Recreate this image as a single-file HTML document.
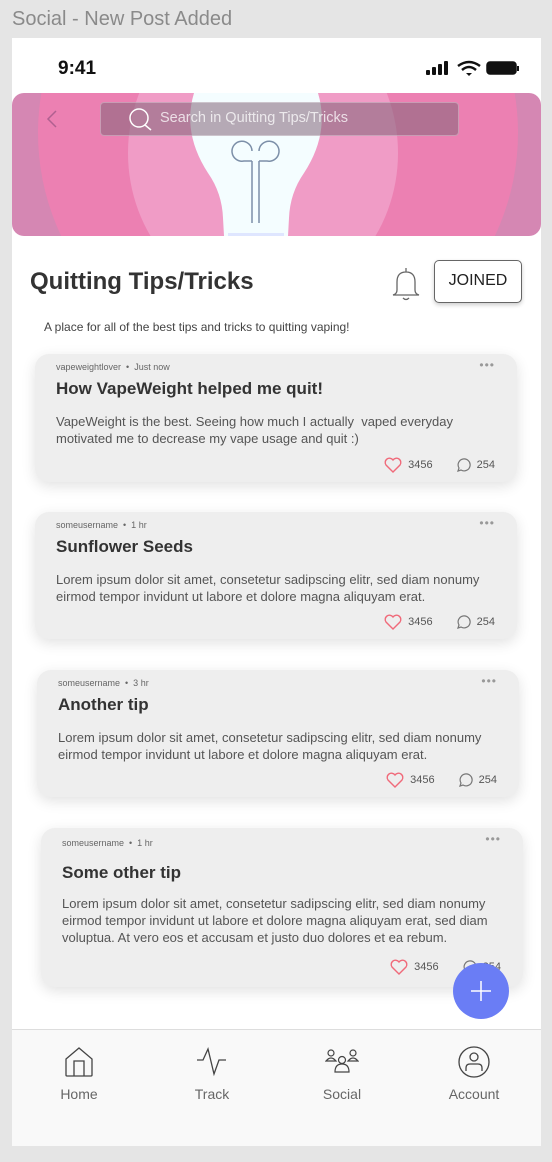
<!DOCTYPE html>
<html><head><meta charset="utf-8"><style>
*{margin:0;padding:0;box-sizing:border-box}
body{width:552px;height:1162px;background:#e5e5e5;font-family:"Liberation Sans",sans-serif;position:relative;overflow:hidden;color:#333}
.abs{position:absolute}
.frame{left:12px;top:38px;width:529px;height:1108px;background:#fff;overflow:hidden}
.card{position:absolute;width:482px;background:#eeeeee;border-radius:14px;box-shadow:0 4px 14px rgba(0,0,0,.12)}
.meta{position:absolute;left:21px;top:8px;font-size:9px;color:#666}
.dots{position:absolute;right:22px;top:4px;font-size:12px;color:#999;letter-spacing:1px}
.ct{position:absolute;left:21px;top:25px;font-size:17px;font-weight:bold;color:#333}
.cb{position:absolute;left:21px;top:59px;font-size:13px;line-height:17px;color:#555;width:440px}
.stats{position:absolute;right:22px;bottom:9px;font-size:11px;color:#555;display:flex;align-items:center}
.stats svg{margin-right:6px}
.nav{left:0;top:991px;width:529px;height:117px;background:#f9f9f9;border-top:1px solid #ddd}
.ni{position:absolute;top:16px;width:90px;text-align:center;font-size:14px;color:#666}
.ni svg{display:block;margin:0 auto 8px}
</style></head><body>
<div class="abs" style="left:12px;top:8px;font-size:20px;color:#8a8a8a">Social - New Post Added</div>
<div class="abs frame">
  <div class="abs" style="left:46px;top:20px;font-size:19px;font-weight:bold;color:#111">9:41</div>
  <svg class="abs" style="left:414px;top:22px" width="112" height="18" viewBox="0 0 112 18">
    <rect x="0" y="10" width="4" height="5" rx="1" fill="#111"/><rect x="6" y="7" width="4" height="8" rx="1" fill="#111"/><rect x="12" y="4" width="4" height="11" rx="1" fill="#111"/><rect x="18" y="1" width="4" height="14" rx="1" fill="#111"/>
    <path d="M32 6 Q43 -2 54 6" stroke="#111" stroke-width="2.5" fill="none"/><path d="M36 10 Q43 4 50 10" stroke="#111" stroke-width="2.5" fill="none"/><path d="M40 13 L43 16 L46 13 Z" fill="#111"/>
    <rect x="61" y="2" width="29" height="12" rx="3" fill="#111" stroke="#111" stroke-width="1.5"/><rect x="91" y="6" width="2" height="5" fill="#111"/>
  </svg>
  <div class="abs" style="left:0;top:55px;width:529px;height:143px;border-radius:12px;overflow:hidden;background:#d587b3">
    <div class="abs" style="left:26px;top:-200px;width:480px;height:480px;border-radius:50%;background:#ec80b2"></div>
    <div class="abs" style="left:116px;top:-90px;width:270px;height:300px;border-radius:50%;background:#f09cc6"></div>
    <svg class="abs" style="left:170px;top:0" width="160" height="143" viewBox="0 0 160 143">
      <path d="M12 0 L136 0 Q148 40 122 80 Q108 100 107 125 L106 143 L42 143 L41 125 Q40 100 26 80 Q0 40 12 0 Z" fill="#f4fdff"/>
      <rect x="46" y="140" width="56" height="3" fill="#dfe6ff"/>
      <path d="M70 130 L70 68 M77 130 L77 68 M70 68 L62 68 A10 10 0 1 1 70 58 M77 68 L85 68 A10 10 0 1 0 77 58" stroke="#7c8fa8" stroke-width="1.5" fill="none"/>
    </svg>
    <div class="abs" style="left:88px;top:9px;width:359px;height:34px;border-radius:4px;background:rgba(130,100,120,.55);border:1px solid rgba(255,255,255,.3)"></div>
    <svg class="abs" style="left:116px;top:14px" width="26" height="26" viewBox="0 0 26 26"><circle cx="11" cy="11" r="9" stroke="#fff" stroke-width="1.5" fill="none"/><path d="M17 18 L23 23" stroke="#fff" stroke-width="1.5"/></svg>
    <div class="abs" style="left:148px;top:17px;font-size:14.5px;color:rgba(255,255,255,.75)">Search in Quitting Tips/Tricks</div>
    <svg class="abs" style="left:33px;top:16px" width="14" height="20" viewBox="0 0 14 20"><path d="M11 2 L3 10 L11 18" stroke="#b06090" stroke-width="1.5" fill="none"/></svg>
  </div>
  <div class="abs" style="left:18px;top:230px;font-size:24px;font-weight:bold;color:#333">Quitting Tips/Tricks</div>
  <svg class="abs" style="left:378px;top:226px" width="34" height="40" viewBox="0 0 34 40"><path d="M16 4 V8 M16 8 Q7 8 7 18 V26 Q7 30 3 31 H29 Q25 30 25 26 V18 Q25 8 16 8 M13 34 Q16 37 19 34" stroke="#666" stroke-width="1.3" fill="none"/></svg>
  <div class="abs" style="left:422px;top:222px;width:88px;height:43px;border:1.5px solid #666;border-radius:5px;font-size:16px;text-align:center;line-height:40px;color:#222;box-shadow:0 2px 4px rgba(0,0,0,.2);background:#fff">JOINED</div>
  <div class="abs" style="left:32px;top:282px;font-size:12px;color:#444">A place for all of the best tips and tricks to quitting vaping!</div>
</div>

<div class="card" style="left:35px;top:354px;height:128px">
  <div class="meta">vapeweightlover &nbsp;•&nbsp; Just now</div><div class="dots">•••</div>
  <div class="ct">How VapeWeight helped me quit!</div>
  <div class="cb" style="width:405px">VapeWeight is the best. Seeing how much I actually &nbsp;vaped everyday motivated me to decrease my vape usage and quit :)</div>
  <div class="stats"><svg width="18" height="16" viewBox="0 0 18 16"><path d="M9 15 L2 8 A4 4 0 0 1 9 3 A4 4 0 0 1 16 8 Z" stroke="#f06a7a" stroke-width="1.4" fill="none"/></svg>3456<span style="width:22px"></span><svg width="16" height="16" viewBox="0 0 16 16"><path d="M3 14 L4 11 A6 6 0 1 1 6 13 Z" stroke="#777" stroke-width="1.2" fill="none"/></svg>254</div>
</div>
<div class="card" style="left:35px;top:512px;height:127px">
  <div class="meta">someusername &nbsp;•&nbsp; 1 hr</div><div class="dots">•••</div>
  <div class="ct">Sunflower Seeds</div>
  <div class="cb">Lorem ipsum dolor sit amet, consetetur sadipscing elitr, sed diam nonumy eirmod tempor invidunt ut labore et dolore magna aliquyam erat.</div>
  <div class="stats"><svg width="18" height="16" viewBox="0 0 18 16"><path d="M9 15 L2 8 A4 4 0 0 1 9 3 A4 4 0 0 1 16 8 Z" stroke="#f06a7a" stroke-width="1.4" fill="none"/></svg>3456<span style="width:22px"></span><svg width="16" height="16" viewBox="0 0 16 16"><path d="M3 14 L4 11 A6 6 0 1 1 6 13 Z" stroke="#777" stroke-width="1.2" fill="none"/></svg>254</div>
</div>
<div class="card" style="left:37px;top:670px;height:127px">
  <div class="meta">someusername &nbsp;•&nbsp; 3 hr</div><div class="dots">•••</div>
  <div class="ct">Another tip</div>
  <div class="cb">Lorem ipsum dolor sit amet, consetetur sadipscing elitr, sed diam nonumy eirmod tempor invidunt ut labore et dolore magna aliquyam erat.</div>
  <div class="stats"><svg width="18" height="16" viewBox="0 0 18 16"><path d="M9 15 L2 8 A4 4 0 0 1 9 3 A4 4 0 0 1 16 8 Z" stroke="#f06a7a" stroke-width="1.4" fill="none"/></svg>3456<span style="width:22px"></span><svg width="16" height="16" viewBox="0 0 16 16"><path d="M3 14 L4 11 A6 6 0 1 1 6 13 Z" stroke="#777" stroke-width="1.2" fill="none"/></svg>254</div>
</div>
<div class="card" style="left:41px;top:828px;height:159px">
  <div class="meta" style="top:10px">someusername &nbsp;•&nbsp; 1 hr</div><div class="dots">•••</div>
  <div class="ct" style="top:35px">Some other tip</div>
  <div class="cb" style="top:67px">Lorem ipsum dolor sit amet, consetetur sadipscing elitr, sed diam nonumy eirmod tempor invidunt ut labore et dolore magna aliquyam erat, sed diam voluptua. At vero eos et accusam et justo duo dolores et ea rebum.</div>
  <div class="stats" style="bottom:12px"><svg width="18" height="16" viewBox="0 0 18 16"><path d="M9 15 L2 8 A4 4 0 0 1 9 3 A4 4 0 0 1 16 8 Z" stroke="#f06a7a" stroke-width="1.4" fill="none"/></svg>3456<span style="width:22px"></span><svg width="16" height="16" viewBox="0 0 16 16"><path d="M3 14 L4 11 A6 6 0 1 1 6 13 Z" stroke="#777" stroke-width="1.2" fill="none"/></svg>254</div>
</div>
<div class="abs" style="left:12px;top:38px;width:529px;height:1108px;pointer-events:none">
  <div class="abs nav">
    <div class="ni" style="left:22px"><svg width="30" height="32" viewBox="0 0 30 32"><path d="M2 13 L15 2 L28 13 V29 Q28 30 27 30 H3 Q2 30 2 29 Z M10 30 V15 H20 V30" stroke="#444" stroke-width="1.3" fill="none"/></svg>Home</div>
    <div class="ni" style="left:155px"><svg width="32" height="32" viewBox="0 0 32 32"><path d="M1 14 H7 L12 3 L18 28 L23 14 H30" stroke="#444" stroke-width="1.3" fill="none"/></svg>Track</div>
    <div class="ni" style="left:285px"><svg width="34" height="32" viewBox="0 0 34 32"><circle cx="6" cy="7" r="3" stroke="#444" fill="none" stroke-width="1.2"/><path d="M1 15 Q6 9 11 15 Z" stroke="#444" fill="none" stroke-width="1.2"/><circle cx="28" cy="7" r="3" stroke="#444" fill="none" stroke-width="1.2"/><path d="M23 15 Q28 9 33 15 Z" stroke="#444" fill="none" stroke-width="1.2"/><circle cx="17" cy="14" r="3.5" stroke="#444" fill="none" stroke-width="1.2"/><path d="M10 26 Q10 18 17 18 Q24 18 24 26 Z" stroke="#444" fill="none" stroke-width="1.2"/></svg>Social</div>
    <div class="ni" style="left:417px"><svg width="32" height="32" viewBox="0 0 32 32"><circle cx="16" cy="16" r="15" stroke="#444" stroke-width="1.3" fill="none"/><circle cx="16" cy="11" r="4" stroke="#444" stroke-width="1.3" fill="none"/><path d="M8 25 V22 Q8 18 12 18 H20 Q24 18 24 22 V25" stroke="#444" stroke-width="1.3" fill="none"/></svg>Account</div>
  </div>
</div>
<div class="abs" style="left:453px;top:963px;width:56px;height:56px;border-radius:50%;background:#6a7df5"></div>
<svg class="abs" style="left:469px;top:979px" width="24" height="24" viewBox="0 0 24 24"><path d="M12 2 V22 M2 12 H22" stroke="#fff" stroke-width="1.5"/></svg>
</body></html>
